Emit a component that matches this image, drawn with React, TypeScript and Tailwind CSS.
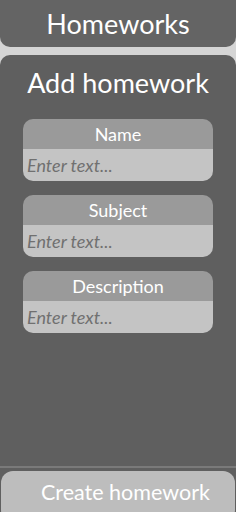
import React from "react";

const font = { fontFamily: '"Lato", "Open Sans", sans-serif' };

function Field({ label }: { label: string }) {
  return (
    <div className="w-[190px] rounded-[10px] overflow-hidden flex flex-col">
      <div className="h-[30px] bg-[#9a9a9a] flex items-center justify-center text-white text-[18px] leading-none">
        {label}
      </div>
      <div className="h-[32px] bg-[#c4c4c4] flex items-center px-[4px] text-[#707070] italic text-[18px] leading-none">
        Enter text...
      </div>
    </div>
  );
}

export default function App() {
  return (
    <div className="w-full h-[512px] bg-[#d5d5d5] flex flex-col overflow-hidden" style={font}>
      <div className="h-[47px] shrink-0 bg-[#646464] rounded-b-[10px] flex items-center justify-center text-white text-[27px] leading-none">
        Homeworks
      </div>
      <div className="mt-[8px] flex-1 bg-[#5f5f5f] rounded-t-[10px] flex flex-col items-center overflow-hidden">
        <div className="mt-[12px] h-[30px] flex items-center text-white text-[27px] leading-none">
          Add homework
        </div>
        <div className="mt-[22px] flex flex-col gap-[14px]">
          <Field label="Name" />
          <Field label="Subject" />
          <Field label="Description" />
        </div>
        <div className="flex-1" />
        <div className="w-full h-[2px] bg-[#7a7a7a]" />
        <div className="w-full pt-[3px] px-[1px] mb-[-10px] shrink-0">
          <div className="h-[51px] w-[234px] bg-[#bdbdbd] rounded-[12px] flex items-start pt-[11px] pl-[40px] text-white text-[21.5px] leading-none">
            Create homework
          </div>
        </div>
      </div>
    </div>
  );
}
